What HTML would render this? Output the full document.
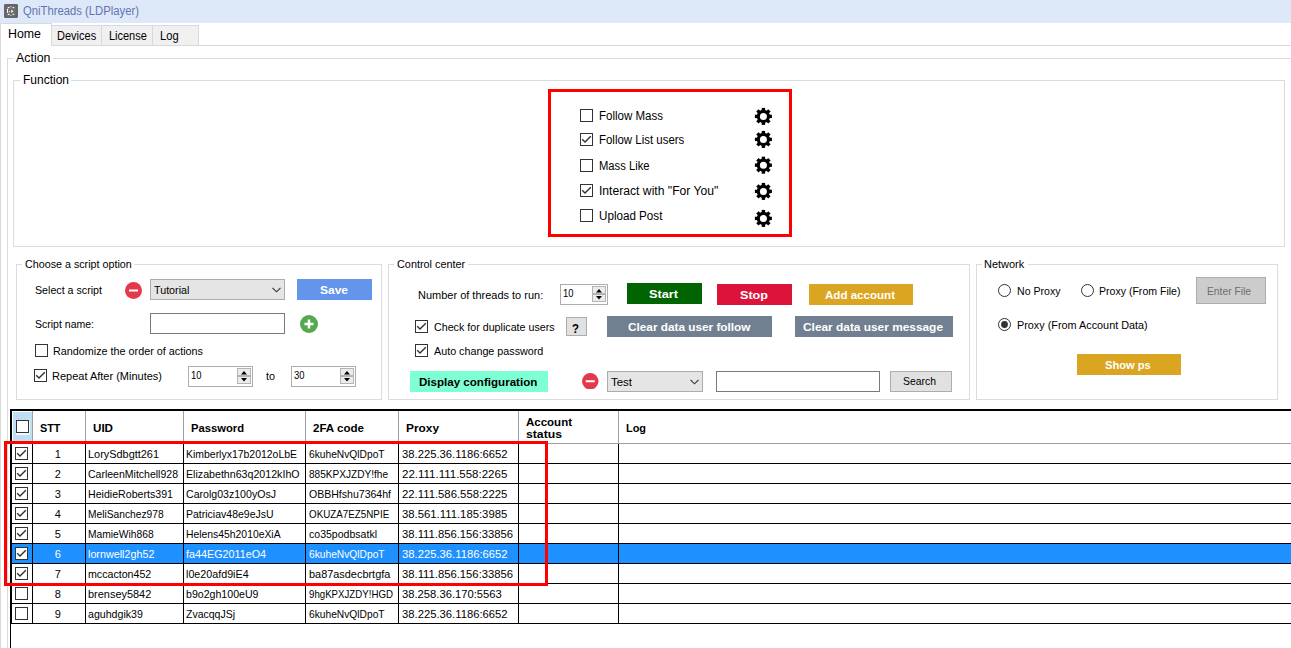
<!DOCTYPE html>
<html><head><meta charset="utf-8"><style>
html,body{margin:0;padding:0;background:#fff;}
#r{position:relative;width:1291px;height:648px;overflow:hidden;background:#fff;font-family:"Liberation Sans",sans-serif;}
.a{position:absolute;}
.t{white-space:pre;transform-origin:0 0;}
.cb{width:13px;height:13px;border:1px solid #333;box-sizing:border-box;}
</style></head><body><div id="r">
<div class="a" style="left:0px;top:0px;width:1291px;height:23px;background:#dde9f8;"></div>
<svg class="a" style="left:4px;top:4px" width="14" height="14"><path d="M1 0 H13 L14 1 V13 L13 14 H1 L0 13 V1Z" fill="#6c6c6c"/><rect x="1" y="1" width="12" height="12" fill="none" stroke="#5e5e5e" stroke-width="0.8"/><rect x="3.8" y="3" width="1.8" height="1.2" fill="#fff"/><rect x="8.6" y="3" width="1.6" height="1.2" fill="#f4f4f4"/><rect x="6" y="2.3" width="2" height="0.8" fill="#bbb"/><rect x="3" y="4.8" width="1.1" height="4" fill="#fff"/><path d="M7.2 5.5 L9.6 7.3 L7.2 9.1Z" fill="#f0f0f0"/><rect x="5" y="7" width="1.2" height="1.2" fill="#ddd"/><rect x="3.8" y="9.8" width="1.8" height="1.2" fill="#fff"/><rect x="8.6" y="9.8" width="1.6" height="1.2" fill="#f4f4f4"/><rect x="6" y="11.3" width="2" height="0.8" fill="#bbb"/></svg>
<div class="a" style="left:51px;top:25px;width:51px;height:21px;background:#f0f0f0;border:1px solid #d9d9d9;box-sizing:border-box;"></div>
<div class="a" style="left:101px;top:25px;width:52px;height:21px;background:#f0f0f0;border:1px solid #d9d9d9;box-sizing:border-box;"></div>
<div class="a" style="left:152px;top:25px;width:47px;height:21px;background:#f0f0f0;border:1px solid #d9d9d9;box-sizing:border-box;"></div>
<div class="a" style="left:51px;top:45px;width:1240px;height:1px;background:#d9d9d9;"></div>
<div class="a" style="left:0px;top:23px;width:52px;height:23px;background:#fff;border:1px solid #d9d9d9;border-bottom:none;box-sizing:border-box;"></div>
<div class="a" style="left:0px;top:45px;width:1px;height:603px;background:#d9d9d9;"></div>
<div class="a" style="left:7px;top:58px;width:7px;height:1px;background:#dcdcdc;"></div>
<div class="a" style="left:53px;top:58px;width:1238px;height:1px;background:#dcdcdc;"></div>
<div class="a" style="left:7px;top:58px;width:1px;height:590px;background:#dcdcdc;"></div>
<div class="a" style="left:13px;top:80px;width:7px;height:1px;background:#dcdcdc;"></div>
<div class="a" style="left:71px;top:80px;width:1214px;height:1px;background:#dcdcdc;"></div>
<div class="a" style="left:13px;top:80px;width:1px;height:167px;background:#dcdcdc;"></div>
<div class="a" style="left:1284px;top:80px;width:1px;height:167px;background:#dcdcdc;"></div>
<div class="a" style="left:13px;top:246px;width:1272px;height:1px;background:#dcdcdc;"></div>
<div class="a" style="left:548px;top:89px;width:244px;height:148px;border:3px solid #ff0000;box-sizing:border-box;"></div>
<div class="a cb" style="left:580px;top:109px;background:#fff"></div>
<div class="a cb" style="left:580px;top:133px;background:#fff"><svg width="13" height="13" style="position:absolute;left:-1px;top:-1px"><path d="M2.2 6.3 L5 9.1 L10.8 3.3" fill="none" stroke="#333" stroke-width="1.4"/></svg></div>
<div class="a cb" style="left:580px;top:159px;background:#fff"></div>
<div class="a cb" style="left:580px;top:184px;background:#fff"><svg width="13" height="13" style="position:absolute;left:-1px;top:-1px"><path d="M2.2 6.3 L5 9.1 L10.8 3.3" fill="none" stroke="#333" stroke-width="1.4"/></svg></div>
<div class="a cb" style="left:580px;top:209px;background:#fff"></div>
<svg class="a" style="left:754px;top:107px" width="20" height="20"><circle cx="9.40" cy="9.40" r="6.6" fill="#000"/><rect x="7.70" y="0.90" width="3.4" height="4" fill="#000" transform="rotate(0 9.40 9.40)"/><rect x="7.70" y="0.90" width="3.4" height="4" fill="#000" transform="rotate(45 9.40 9.40)"/><rect x="7.70" y="0.90" width="3.4" height="4" fill="#000" transform="rotate(90 9.40 9.40)"/><rect x="7.70" y="0.90" width="3.4" height="4" fill="#000" transform="rotate(135 9.40 9.40)"/><rect x="7.70" y="0.90" width="3.4" height="4" fill="#000" transform="rotate(180 9.40 9.40)"/><rect x="7.70" y="0.90" width="3.4" height="4" fill="#000" transform="rotate(225 9.40 9.40)"/><rect x="7.70" y="0.90" width="3.4" height="4" fill="#000" transform="rotate(270 9.40 9.40)"/><rect x="7.70" y="0.90" width="3.4" height="4" fill="#000" transform="rotate(315 9.40 9.40)"/><circle cx="9.40" cy="9.40" r="3.5" fill="#fff"/></svg>
<svg class="a" style="left:754px;top:130px" width="20" height="20"><circle cx="9.40" cy="9.40" r="6.6" fill="#000"/><rect x="7.70" y="0.90" width="3.4" height="4" fill="#000" transform="rotate(0 9.40 9.40)"/><rect x="7.70" y="0.90" width="3.4" height="4" fill="#000" transform="rotate(45 9.40 9.40)"/><rect x="7.70" y="0.90" width="3.4" height="4" fill="#000" transform="rotate(90 9.40 9.40)"/><rect x="7.70" y="0.90" width="3.4" height="4" fill="#000" transform="rotate(135 9.40 9.40)"/><rect x="7.70" y="0.90" width="3.4" height="4" fill="#000" transform="rotate(180 9.40 9.40)"/><rect x="7.70" y="0.90" width="3.4" height="4" fill="#000" transform="rotate(225 9.40 9.40)"/><rect x="7.70" y="0.90" width="3.4" height="4" fill="#000" transform="rotate(270 9.40 9.40)"/><rect x="7.70" y="0.90" width="3.4" height="4" fill="#000" transform="rotate(315 9.40 9.40)"/><circle cx="9.40" cy="9.40" r="3.5" fill="#fff"/></svg>
<svg class="a" style="left:754px;top:156px" width="20" height="20"><circle cx="9.40" cy="9.20" r="6.6" fill="#000"/><rect x="7.70" y="0.70" width="3.4" height="4" fill="#000" transform="rotate(0 9.40 9.20)"/><rect x="7.70" y="0.70" width="3.4" height="4" fill="#000" transform="rotate(45 9.40 9.20)"/><rect x="7.70" y="0.70" width="3.4" height="4" fill="#000" transform="rotate(90 9.40 9.20)"/><rect x="7.70" y="0.70" width="3.4" height="4" fill="#000" transform="rotate(135 9.40 9.20)"/><rect x="7.70" y="0.70" width="3.4" height="4" fill="#000" transform="rotate(180 9.40 9.20)"/><rect x="7.70" y="0.70" width="3.4" height="4" fill="#000" transform="rotate(225 9.40 9.20)"/><rect x="7.70" y="0.70" width="3.4" height="4" fill="#000" transform="rotate(270 9.40 9.20)"/><rect x="7.70" y="0.70" width="3.4" height="4" fill="#000" transform="rotate(315 9.40 9.20)"/><circle cx="9.40" cy="9.20" r="3.5" fill="#fff"/></svg>
<svg class="a" style="left:754px;top:182px" width="20" height="20"><circle cx="9.40" cy="9.40" r="6.6" fill="#000"/><rect x="7.70" y="0.90" width="3.4" height="4" fill="#000" transform="rotate(0 9.40 9.40)"/><rect x="7.70" y="0.90" width="3.4" height="4" fill="#000" transform="rotate(45 9.40 9.40)"/><rect x="7.70" y="0.90" width="3.4" height="4" fill="#000" transform="rotate(90 9.40 9.40)"/><rect x="7.70" y="0.90" width="3.4" height="4" fill="#000" transform="rotate(135 9.40 9.40)"/><rect x="7.70" y="0.90" width="3.4" height="4" fill="#000" transform="rotate(180 9.40 9.40)"/><rect x="7.70" y="0.90" width="3.4" height="4" fill="#000" transform="rotate(225 9.40 9.40)"/><rect x="7.70" y="0.90" width="3.4" height="4" fill="#000" transform="rotate(270 9.40 9.40)"/><rect x="7.70" y="0.90" width="3.4" height="4" fill="#000" transform="rotate(315 9.40 9.40)"/><circle cx="9.40" cy="9.40" r="3.5" fill="#fff"/></svg>
<svg class="a" style="left:754px;top:209px" width="20" height="20"><circle cx="9.40" cy="9.40" r="6.6" fill="#000"/><rect x="7.70" y="0.90" width="3.4" height="4" fill="#000" transform="rotate(0 9.40 9.40)"/><rect x="7.70" y="0.90" width="3.4" height="4" fill="#000" transform="rotate(45 9.40 9.40)"/><rect x="7.70" y="0.90" width="3.4" height="4" fill="#000" transform="rotate(90 9.40 9.40)"/><rect x="7.70" y="0.90" width="3.4" height="4" fill="#000" transform="rotate(135 9.40 9.40)"/><rect x="7.70" y="0.90" width="3.4" height="4" fill="#000" transform="rotate(180 9.40 9.40)"/><rect x="7.70" y="0.90" width="3.4" height="4" fill="#000" transform="rotate(225 9.40 9.40)"/><rect x="7.70" y="0.90" width="3.4" height="4" fill="#000" transform="rotate(270 9.40 9.40)"/><rect x="7.70" y="0.90" width="3.4" height="4" fill="#000" transform="rotate(315 9.40 9.40)"/><circle cx="9.40" cy="9.40" r="3.5" fill="#fff"/></svg>
<div class="a" style="left:16px;top:264px;width:6px;height:1px;background:#dcdcdc;"></div>
<div class="a" style="left:134px;top:264px;width:248px;height:1px;background:#dcdcdc;"></div>
<div class="a" style="left:16px;top:264px;width:1px;height:136px;background:#dcdcdc;"></div>
<div class="a" style="left:381px;top:264px;width:1px;height:136px;background:#dcdcdc;"></div>
<div class="a" style="left:16px;top:399px;width:366px;height:1px;background:#dcdcdc;"></div>
<svg class="a" style="left:125.0px;top:282.0px" width="17" height="17"><circle cx="8.5" cy="8.5" r="8.5" fill="#e5394b"/><rect x="4.0" y="7.5" width="9" height="2" fill="#fff"/></svg>
<div class="a" style="left:150px;top:279px;width:135px;height:21px;background:#e5e5e5;border:1px solid #acacac;box-sizing:border-box;"></div>
<svg class="a" style="left:271.5px;top:287.0px" width="9" height="6"><path d="M0.5 0.8 L4.5 4.8 L8.5 0.8" fill="none" stroke="#333" stroke-width="1.1"/></svg>
<div class="a" style="left:297px;top:279px;width:75px;height:21px;background:#6495ed;"></div>
<div class="a" style="left:150px;top:313px;width:135px;height:21px;background:#fff;border:1px solid #7a7a7a;box-sizing:border-box;"></div>
<svg class="a" style="left:300.0px;top:315.0px" width="18" height="18"><circle cx="9.0" cy="9.0" r="9.0" fill="#55a84c"/><rect x="4.5" y="7.75" width="9" height="2.5" fill="#fff"/><rect x="7.75" y="4.5" width="2.5" height="9" fill="#fff"/></svg>
<div class="a cb" style="left:35px;top:344px;background:#fff"></div>
<div class="a cb" style="left:34px;top:369px;background:#fff"><svg width="13" height="13" style="position:absolute;left:-1px;top:-1px"><path d="M2.2 6.3 L5 9.1 L10.8 3.3" fill="none" stroke="#333" stroke-width="1.4"/></svg></div>
<div class="a" style="left:188px;top:366px;width:65px;height:21px;background:#fff;border:1px solid #adadad;box-sizing:border-box;"></div>
<div class="a" style="left:237px;top:368px;width:14px;height:16px;background:#ececec;border:1px solid #b4b4b4;box-sizing:border-box;"></div>
<div class="a" style="left:237px;top:375px;width:14px;height:2px;background:#b4b4b4;"></div>
<svg class="a" style="left:241px;top:371px" width="6" height="4"><path d="M0 3.5 L3 0 L6 3.5Z" fill="#000"/></svg>
<svg class="a" style="left:241px;top:378px" width="6" height="4"><path d="M0 0 L3 3.5 L6 0Z" fill="#000"/></svg>
<div class="a" style="left:291px;top:366px;width:65px;height:21px;background:#fff;border:1px solid #adadad;box-sizing:border-box;"></div>
<div class="a" style="left:340px;top:368px;width:14px;height:16px;background:#ececec;border:1px solid #b4b4b4;box-sizing:border-box;"></div>
<div class="a" style="left:340px;top:375px;width:14px;height:2px;background:#b4b4b4;"></div>
<svg class="a" style="left:344px;top:371px" width="6" height="4"><path d="M0 3.5 L3 0 L6 3.5Z" fill="#000"/></svg>
<svg class="a" style="left:344px;top:378px" width="6" height="4"><path d="M0 0 L3 3.5 L6 0Z" fill="#000"/></svg>
<div class="a" style="left:388px;top:264px;width:6px;height:1px;background:#dcdcdc;"></div>
<div class="a" style="left:468px;top:264px;width:502px;height:1px;background:#dcdcdc;"></div>
<div class="a" style="left:388px;top:264px;width:1px;height:136px;background:#dcdcdc;"></div>
<div class="a" style="left:969px;top:264px;width:1px;height:136px;background:#dcdcdc;"></div>
<div class="a" style="left:388px;top:399px;width:582px;height:1px;background:#dcdcdc;"></div>
<div class="a" style="left:560px;top:284px;width:48px;height:21px;background:#fff;border:1px solid #adadad;box-sizing:border-box;"></div>
<div class="a" style="left:592px;top:286px;width:14px;height:16px;background:#ececec;border:1px solid #b4b4b4;box-sizing:border-box;"></div>
<div class="a" style="left:592px;top:293px;width:14px;height:2px;background:#b4b4b4;"></div>
<svg class="a" style="left:596px;top:289px" width="6" height="4"><path d="M0 3.5 L3 0 L6 3.5Z" fill="#000"/></svg>
<svg class="a" style="left:596px;top:296px" width="6" height="4"><path d="M0 0 L3 3.5 L6 0Z" fill="#000"/></svg>
<div class="a" style="left:627px;top:283px;width:75px;height:21px;background:#006400;"></div>
<div class="a" style="left:717px;top:284px;width:75px;height:21px;background:#dc143c;"></div>
<div class="a" style="left:809px;top:284px;width:104px;height:21px;background:#daa520;"></div>
<div class="a cb" style="left:415px;top:320px;background:#fff"><svg width="13" height="13" style="position:absolute;left:-1px;top:-1px"><path d="M2.2 6.3 L5 9.1 L10.8 3.3" fill="none" stroke="#333" stroke-width="1.4"/></svg></div>
<div class="a" style="left:566px;top:317px;width:21px;height:19px;background:#e1e1e1;border:1px solid #adadad;box-sizing:border-box;"></div>
<div class="a" style="left:607px;top:316px;width:165px;height:21px;background:#708090;"></div>
<div class="a" style="left:795px;top:316px;width:158px;height:21px;background:#708090;"></div>
<div class="a cb" style="left:415px;top:344px;background:#fff"><svg width="13" height="13" style="position:absolute;left:-1px;top:-1px"><path d="M2.2 6.3 L5 9.1 L10.8 3.3" fill="none" stroke="#333" stroke-width="1.4"/></svg></div>
<div class="a" style="left:410px;top:371px;width:138px;height:21px;background:#7fffd4;"></div>
<svg class="a" style="left:582.25px;top:372.75px" width="16.5" height="16.5"><circle cx="8.25" cy="8.25" r="8.25" fill="#e5394b"/><rect x="3.75" y="7.25" width="9" height="2" fill="#fff"/></svg>
<div class="a" style="left:607px;top:371px;width:96px;height:21px;background:#e5e5e5;border:1px solid #acacac;box-sizing:border-box;"></div>
<svg class="a" style="left:689.5px;top:379.0px" width="9" height="6"><path d="M0.5 0.8 L4.5 4.8 L8.5 0.8" fill="none" stroke="#333" stroke-width="1.1"/></svg>
<div class="a" style="left:716px;top:371px;width:164px;height:21px;background:#fff;border:1px solid #7a7a7a;box-sizing:border-box;"></div>
<div class="a" style="left:890px;top:371px;width:62px;height:21px;background:#e1e1e1;border:1px solid #adadad;box-sizing:border-box;"></div>
<div class="a" style="left:976px;top:264px;width:6px;height:1px;background:#dcdcdc;"></div>
<div class="a" style="left:1028px;top:264px;width:250px;height:1px;background:#dcdcdc;"></div>
<div class="a" style="left:976px;top:264px;width:1px;height:136px;background:#dcdcdc;"></div>
<div class="a" style="left:1277px;top:264px;width:1px;height:136px;background:#dcdcdc;"></div>
<div class="a" style="left:976px;top:399px;width:302px;height:1px;background:#dcdcdc;"></div>
<svg class="a" style="left:998px;top:284px" width="14" height="14"><circle cx="6.5" cy="6.5" r="6" fill="#fff" stroke="#333" stroke-width="1"/></svg>
<svg class="a" style="left:1081px;top:284px" width="14" height="14"><circle cx="6.5" cy="6.5" r="6" fill="#fff" stroke="#333" stroke-width="1"/></svg>
<div class="a" style="left:1196px;top:277px;width:70px;height:27px;background:#cccccc;border:1px solid #adadad;box-sizing:border-box;"></div>
<svg class="a" style="left:998px;top:318px" width="14" height="14"><circle cx="6.5" cy="6.5" r="6" fill="#fff" stroke="#333" stroke-width="1"/><circle cx="6.5" cy="6.5" r="3.4" fill="#333"/></svg>
<div class="a" style="left:1077px;top:354px;width:104px;height:21px;background:#daa520;"></div>
<div class="a" style="left:10px;top:409px;width:1281px;height:2px;background:#000;"></div>
<div class="a" style="left:10px;top:409px;width:1px;height:239px;background:#000;"></div>
<div class="a" style="left:11px;top:409px;width:1px;height:215px;background:#000;"></div>
<div class="a" style="left:13px;top:412px;width:19px;height:31px;background:#bde0f2;"></div>
<div class="a" style="left:16px;top:433px;width:14px;height:2px;background:#f4f8fa;"></div>
<div class="a" style="left:29px;top:421px;width:1px;height:13px;background:#f4f8fa;"></div>
<div class="a cb" style="left:16px;top:420px;background:#fff"></div>
<div class="a" style="left:16px;top:416px;width:1px;height:1px;background:#d8b8f0;"></div>
<div class="a" style="left:19px;top:415px;width:1px;height:1px;background:#d8b8f0;"></div>
<div class="a" style="left:22px;top:415px;width:1px;height:1px;background:#d8b8f0;"></div>
<div class="a" style="left:18px;top:418px;width:1px;height:1px;background:#d8b8f0;"></div>
<div class="a" style="left:21px;top:417px;width:1px;height:1px;background:#d8b8f0;"></div>
<div class="a" style="left:24px;top:418px;width:1px;height:1px;background:#d8b8f0;"></div>
<div class="a" style="left:17px;top:438px;width:1px;height:1px;background:#d8b8f0;"></div>
<div class="a" style="left:20px;top:438px;width:1px;height:1px;background:#d8b8f0;"></div>
<div class="a" style="left:23px;top:438px;width:1px;height:1px;background:#d8b8f0;"></div>
<div class="a" style="left:32px;top:411px;width:1px;height:32px;background:#a0a0a0;"></div>
<div class="a" style="left:85px;top:411px;width:1px;height:32px;background:#a0a0a0;"></div>
<div class="a" style="left:183px;top:411px;width:1px;height:32px;background:#a0a0a0;"></div>
<div class="a" style="left:305px;top:411px;width:1px;height:32px;background:#a0a0a0;"></div>
<div class="a" style="left:398px;top:411px;width:1px;height:32px;background:#a0a0a0;"></div>
<div class="a" style="left:518px;top:411px;width:1px;height:32px;background:#a0a0a0;"></div>
<div class="a" style="left:618px;top:411px;width:1px;height:32px;background:#a0a0a0;"></div>
<div class="a" style="left:12px;top:443px;width:1279px;height:1px;background:#a0a0a0;"></div>
<div class="a" style="left:12px;top:463px;width:1279px;height:1px;background:#000;"></div>
<div class="a" style="left:32px;top:444px;width:1px;height:20px;background:#000;"></div>
<div class="a" style="left:85px;top:444px;width:1px;height:20px;background:#000;"></div>
<div class="a" style="left:183px;top:444px;width:1px;height:20px;background:#000;"></div>
<div class="a" style="left:305px;top:444px;width:1px;height:20px;background:#000;"></div>
<div class="a" style="left:398px;top:444px;width:1px;height:20px;background:#000;"></div>
<div class="a" style="left:518px;top:444px;width:1px;height:20px;background:#000;"></div>
<div class="a" style="left:618px;top:444px;width:1px;height:20px;background:#000;"></div>
<div class="a cb" style="left:15px;top:447px;background:#fff"><svg width="13" height="13" style="position:absolute;left:-1px;top:-1px"><path d="M2.2 6.3 L5 9.1 L10.8 3.3" fill="none" stroke="#333" stroke-width="1.4"/></svg></div>
<div class="a" style="left:12px;top:483px;width:1279px;height:1px;background:#000;"></div>
<div class="a" style="left:32px;top:464px;width:1px;height:20px;background:#000;"></div>
<div class="a" style="left:85px;top:464px;width:1px;height:20px;background:#000;"></div>
<div class="a" style="left:183px;top:464px;width:1px;height:20px;background:#000;"></div>
<div class="a" style="left:305px;top:464px;width:1px;height:20px;background:#000;"></div>
<div class="a" style="left:398px;top:464px;width:1px;height:20px;background:#000;"></div>
<div class="a" style="left:518px;top:464px;width:1px;height:20px;background:#000;"></div>
<div class="a" style="left:618px;top:464px;width:1px;height:20px;background:#000;"></div>
<div class="a cb" style="left:15px;top:467px;background:#fff"><svg width="13" height="13" style="position:absolute;left:-1px;top:-1px"><path d="M2.2 6.3 L5 9.1 L10.8 3.3" fill="none" stroke="#333" stroke-width="1.4"/></svg></div>
<div class="a" style="left:12px;top:503px;width:1279px;height:1px;background:#000;"></div>
<div class="a" style="left:32px;top:484px;width:1px;height:20px;background:#000;"></div>
<div class="a" style="left:85px;top:484px;width:1px;height:20px;background:#000;"></div>
<div class="a" style="left:183px;top:484px;width:1px;height:20px;background:#000;"></div>
<div class="a" style="left:305px;top:484px;width:1px;height:20px;background:#000;"></div>
<div class="a" style="left:398px;top:484px;width:1px;height:20px;background:#000;"></div>
<div class="a" style="left:518px;top:484px;width:1px;height:20px;background:#000;"></div>
<div class="a" style="left:618px;top:484px;width:1px;height:20px;background:#000;"></div>
<div class="a cb" style="left:15px;top:487px;background:#fff"><svg width="13" height="13" style="position:absolute;left:-1px;top:-1px"><path d="M2.2 6.3 L5 9.1 L10.8 3.3" fill="none" stroke="#333" stroke-width="1.4"/></svg></div>
<div class="a" style="left:12px;top:523px;width:1279px;height:1px;background:#000;"></div>
<div class="a" style="left:32px;top:504px;width:1px;height:20px;background:#000;"></div>
<div class="a" style="left:85px;top:504px;width:1px;height:20px;background:#000;"></div>
<div class="a" style="left:183px;top:504px;width:1px;height:20px;background:#000;"></div>
<div class="a" style="left:305px;top:504px;width:1px;height:20px;background:#000;"></div>
<div class="a" style="left:398px;top:504px;width:1px;height:20px;background:#000;"></div>
<div class="a" style="left:518px;top:504px;width:1px;height:20px;background:#000;"></div>
<div class="a" style="left:618px;top:504px;width:1px;height:20px;background:#000;"></div>
<div class="a cb" style="left:15px;top:507px;background:#fff"><svg width="13" height="13" style="position:absolute;left:-1px;top:-1px"><path d="M2.2 6.3 L5 9.1 L10.8 3.3" fill="none" stroke="#333" stroke-width="1.4"/></svg></div>
<div class="a" style="left:12px;top:543px;width:1279px;height:1px;background:#000;"></div>
<div class="a" style="left:32px;top:524px;width:1px;height:20px;background:#000;"></div>
<div class="a" style="left:85px;top:524px;width:1px;height:20px;background:#000;"></div>
<div class="a" style="left:183px;top:524px;width:1px;height:20px;background:#000;"></div>
<div class="a" style="left:305px;top:524px;width:1px;height:20px;background:#000;"></div>
<div class="a" style="left:398px;top:524px;width:1px;height:20px;background:#000;"></div>
<div class="a" style="left:518px;top:524px;width:1px;height:20px;background:#000;"></div>
<div class="a" style="left:618px;top:524px;width:1px;height:20px;background:#000;"></div>
<div class="a cb" style="left:15px;top:527px;background:#fff"><svg width="13" height="13" style="position:absolute;left:-1px;top:-1px"><path d="M2.2 6.3 L5 9.1 L10.8 3.3" fill="none" stroke="#333" stroke-width="1.4"/></svg></div>
<div class="a" style="left:12px;top:544px;width:1279px;height:19px;background:#1e90ff;"></div>
<div class="a" style="left:12px;top:563px;width:1279px;height:1px;background:#000;"></div>
<div class="a" style="left:32px;top:544px;width:1px;height:20px;background:#000;"></div>
<div class="a" style="left:85px;top:544px;width:1px;height:20px;background:#000;"></div>
<div class="a" style="left:183px;top:544px;width:1px;height:20px;background:#000;"></div>
<div class="a" style="left:305px;top:544px;width:1px;height:20px;background:#000;"></div>
<div class="a" style="left:398px;top:544px;width:1px;height:20px;background:#000;"></div>
<div class="a" style="left:518px;top:544px;width:1px;height:20px;background:#000;"></div>
<div class="a" style="left:618px;top:544px;width:1px;height:20px;background:#000;"></div>
<div class="a cb" style="left:15px;top:547px;background:#fff"><svg width="13" height="13" style="position:absolute;left:-1px;top:-1px"><path d="M2.2 6.3 L5 9.1 L10.8 3.3" fill="none" stroke="#333" stroke-width="1.4"/></svg></div>
<div class="a" style="left:12px;top:583px;width:1279px;height:1px;background:#000;"></div>
<div class="a" style="left:32px;top:564px;width:1px;height:20px;background:#000;"></div>
<div class="a" style="left:85px;top:564px;width:1px;height:20px;background:#000;"></div>
<div class="a" style="left:183px;top:564px;width:1px;height:20px;background:#000;"></div>
<div class="a" style="left:305px;top:564px;width:1px;height:20px;background:#000;"></div>
<div class="a" style="left:398px;top:564px;width:1px;height:20px;background:#000;"></div>
<div class="a" style="left:518px;top:564px;width:1px;height:20px;background:#000;"></div>
<div class="a" style="left:618px;top:564px;width:1px;height:20px;background:#000;"></div>
<div class="a cb" style="left:15px;top:567px;background:#fff"><svg width="13" height="13" style="position:absolute;left:-1px;top:-1px"><path d="M2.2 6.3 L5 9.1 L10.8 3.3" fill="none" stroke="#333" stroke-width="1.4"/></svg></div>
<div class="a" style="left:12px;top:603px;width:1279px;height:1px;background:#000;"></div>
<div class="a" style="left:32px;top:584px;width:1px;height:20px;background:#000;"></div>
<div class="a" style="left:85px;top:584px;width:1px;height:20px;background:#000;"></div>
<div class="a" style="left:183px;top:584px;width:1px;height:20px;background:#000;"></div>
<div class="a" style="left:305px;top:584px;width:1px;height:20px;background:#000;"></div>
<div class="a" style="left:398px;top:584px;width:1px;height:20px;background:#000;"></div>
<div class="a" style="left:518px;top:584px;width:1px;height:20px;background:#000;"></div>
<div class="a" style="left:618px;top:584px;width:1px;height:20px;background:#000;"></div>
<div class="a cb" style="left:15px;top:587px;background:#fff"></div>
<div class="a" style="left:12px;top:623px;width:1279px;height:1px;background:#000;"></div>
<div class="a" style="left:32px;top:604px;width:1px;height:20px;background:#000;"></div>
<div class="a" style="left:85px;top:604px;width:1px;height:20px;background:#000;"></div>
<div class="a" style="left:183px;top:604px;width:1px;height:20px;background:#000;"></div>
<div class="a" style="left:305px;top:604px;width:1px;height:20px;background:#000;"></div>
<div class="a" style="left:398px;top:604px;width:1px;height:20px;background:#000;"></div>
<div class="a" style="left:518px;top:604px;width:1px;height:20px;background:#000;"></div>
<div class="a" style="left:618px;top:604px;width:1px;height:20px;background:#000;"></div>
<div class="a cb" style="left:15px;top:607px;background:#fff"></div>
<div class="a" style="left:4px;top:441px;width:544px;height:145px;border:3px solid #ff0000;box-sizing:border-box;"></div>
<div class="a t" style="top:5px;font-size:12px;line-height:12px;color:#6474b0;left:22.50px;transform:scaleX(0.9402);">QniThreads (LDPlayer)</div>
<div class="a t" style="top:28px;font-size:12px;line-height:12px;color:#000;left:8.10px;transform:scaleX(1.0307);">Home</div>
<div class="a t" style="top:30px;font-size:12px;line-height:12px;color:#000;left:56.70px;transform:scaleX(0.9183);">Devices</div>
<div class="a t" style="top:30px;font-size:12px;line-height:12px;color:#000;left:108.80px;transform:scaleX(0.9136);">License</div>
<div class="a t" style="top:30px;font-size:12px;line-height:12px;color:#000;left:159.60px;transform:scaleX(0.9285);">Log</div>
<div class="a t" style="top:52px;font-size:12px;line-height:12px;color:#000;left:16.30px;transform:scaleX(1.0312);">Action</div>
<div class="a t" style="top:74px;font-size:12px;line-height:12px;color:#000;left:22.50px;transform:scaleX(0.9993);">Function</div>
<div class="a t" style="top:110px;font-size:12px;line-height:12px;color:#000;left:598.60px;transform:scaleX(0.9597);">Follow Mass</div>
<div class="a t" style="top:134px;font-size:12px;line-height:12px;color:#000;left:598.60px;transform:scaleX(0.9544);">Follow List users</div>
<div class="a t" style="top:160px;font-size:12px;line-height:12px;color:#000;left:598.60px;transform:scaleX(0.9346);">Mass Like</div>
<div class="a t" style="top:185px;font-size:12px;line-height:12px;color:#000;left:598.60px;transform:scaleX(1.0117);">Interact with &quot;For You&quot;</div>
<div class="a t" style="top:210px;font-size:12px;line-height:12px;color:#000;left:598.60px;transform:scaleX(0.9698);">Upload Post</div>
<div class="a t" style="top:259px;font-size:11.5px;line-height:11.5px;color:#000;left:24.60px;transform:scaleX(0.9324);">Choose a script option</div>
<div class="a t" style="top:285px;font-size:11.5px;line-height:11.5px;color:#000;left:34.60px;transform:scaleX(0.9275);">Select a script</div>
<div class="a t" style="top:285px;font-size:11.5px;line-height:11.5px;color:#000;left:153.90px;transform:scaleX(0.9335);">Tutorial</div>
<div class="a t" style="top:285px;font-size:11px;line-height:11px;color:#fff;font-weight:bold;left:320.00px;transform:scaleX(1.0894);">Save</div>
<div class="a t" style="top:319px;font-size:11.5px;line-height:11.5px;color:#000;left:34.60px;transform:scaleX(0.9138);">Script name:</div>
<div class="a t" style="top:346px;font-size:11.5px;line-height:11.5px;color:#000;left:53.40px;transform:scaleX(0.9386);">Randomize the order of actions</div>
<div class="a t" style="top:371px;font-size:11.5px;line-height:11.5px;color:#000;left:52.20px;transform:scaleX(0.9560);">Repeat After (Minutes)</div>
<div class="a t" style="top:370px;font-size:11.5px;line-height:11.5px;color:#000;left:191.00px;transform:scaleX(0.8205);">10</div>
<div class="a t" style="top:371px;font-size:11.5px;line-height:11.5px;color:#000;left:266.00px;transform:scaleX(0.9381);">to</div>
<div class="a t" style="top:370px;font-size:11.5px;line-height:11.5px;color:#000;left:294.00px;transform:scaleX(0.8205);">30</div>
<div class="a t" style="top:259px;font-size:11.5px;line-height:11.5px;color:#000;left:396.60px;transform:scaleX(0.9441);">Control center</div>
<div class="a t" style="top:290px;font-size:11.5px;line-height:11.5px;color:#000;left:417.60px;transform:scaleX(0.9554);">Number of threads to run:</div>
<div class="a t" style="top:288px;font-size:11.5px;line-height:11.5px;color:#000;left:562.70px;transform:scaleX(0.8205);">10</div>
<div class="a t" style="top:289px;font-size:11px;line-height:11px;color:#fff;font-weight:bold;left:649.00px;transform:scaleX(1.1571);">Start</div>
<div class="a t" style="top:290px;font-size:11px;line-height:11px;color:#fff;font-weight:bold;left:740.00px;transform:scaleX(1.1450);">Stop</div>
<div class="a t" style="top:290px;font-size:11px;line-height:11px;color:#fff;font-weight:bold;left:825.00px;transform:scaleX(1.0507);">Add account</div>
<div class="a t" style="top:322px;font-size:11.5px;line-height:11.5px;color:#000;left:433.60px;transform:scaleX(0.9294);">Check for duplicate users</div>
<div class="a t" style="top:323px;font-size:12px;line-height:12px;color:#000;font-weight:bold;left:572.00px;transform:scaleX(0.9532);">?</div>
<div class="a t" style="top:322px;font-size:11px;line-height:11px;color:#fff;font-weight:bold;left:627.60px;transform:scaleX(1.0716);">Clear data user follow</div>
<div class="a t" style="top:322px;font-size:11px;line-height:11px;color:#fff;font-weight:bold;left:803.00px;transform:scaleX(1.0799);">Clear data user message</div>
<div class="a t" style="top:346px;font-size:11.5px;line-height:11.5px;color:#000;left:434.00px;transform:scaleX(0.9342);">Auto change password</div>
<div class="a t" style="top:377px;font-size:11px;line-height:11px;color:#000;font-weight:bold;left:419.30px;transform:scaleX(1.0518);">Display configuration</div>
<div class="a t" style="top:377px;font-size:11.5px;line-height:11.5px;color:#000;left:610.70px;transform:scaleX(0.9956);">Test</div>
<div class="a t" style="top:376px;font-size:11.5px;line-height:11.5px;color:#000;left:903.40px;transform:scaleX(0.9057);">Search</div>
<div class="a t" style="top:259px;font-size:11.5px;line-height:11.5px;color:#000;left:984.40px;transform:scaleX(0.9529);">Network</div>
<div class="a t" style="top:286px;font-size:11.5px;line-height:11.5px;color:#000;left:1016.50px;transform:scaleX(0.9197);">No Proxy</div>
<div class="a t" style="top:286px;font-size:11.5px;line-height:11.5px;color:#000;left:1099.40px;transform:scaleX(0.9177);">Proxy (From File)</div>
<div class="a t" style="top:286px;font-size:11.5px;line-height:11.5px;color:#6d6d6d;left:1207.40px;transform:scaleX(0.8940);">Enter File</div>
<div class="a t" style="top:320px;font-size:11.5px;line-height:11.5px;color:#000;left:1016.50px;transform:scaleX(0.9424);">Proxy (From Account Data)</div>
<div class="a t" style="top:360px;font-size:11px;line-height:11px;color:#fff;font-weight:bold;left:1105.00px;transform:scaleX(1.0125);">Show ps</div>
<div class="a t" style="top:423px;font-size:11px;line-height:11px;color:#000;font-weight:bold;left:40.00px;transform:scaleX(0.9865);">STT</div>
<div class="a t" style="top:423px;font-size:11px;line-height:11px;color:#000;font-weight:bold;left:93.00px;transform:scaleX(1.0552);">UID</div>
<div class="a t" style="top:423px;font-size:11px;line-height:11px;color:#000;font-weight:bold;left:191.00px;transform:scaleX(1.0198);">Password</div>
<div class="a t" style="top:423px;font-size:11px;line-height:11px;color:#000;font-weight:bold;left:313.00px;transform:scaleX(1.0515);">2FA code</div>
<div class="a t" style="top:423px;font-size:11px;line-height:11px;color:#000;font-weight:bold;left:406.00px;transform:scaleX(1.0792);">Proxy</div>
<div class="a t" style="top:417px;font-size:11px;line-height:11px;color:#000;font-weight:bold;left:526.30px;transform:scaleX(1.0455);">Account</div>
<div class="a t" style="top:429px;font-size:11px;line-height:11px;color:#000;font-weight:bold;left:526.30px;transform:scaleX(1.1109);">status</div>
<div class="a t" style="top:423px;font-size:11px;line-height:11px;color:#000;font-weight:bold;left:626.00px;transform:scaleX(0.9915);">Log</div>
<div class="a t" style="top:449px;font-size:11px;line-height:11px;color:#000;left:54.64px;">1</div>
<div class="a t" style="top:449px;font-size:11px;line-height:11px;color:#000;left:88.40px;transform:scaleX(0.9921);">LorySdbgtt261</div>
<div class="a t" style="top:449px;font-size:11px;line-height:11px;color:#000;left:186.40px;transform:scaleX(0.9502);">Kimberlyx17b2012oLbE</div>
<div class="a t" style="top:449px;font-size:11px;line-height:11px;color:#000;left:308.90px;transform:scaleX(0.9296);">6kuheNvQlDpoT</div>
<div class="a t" style="top:449px;font-size:11px;line-height:11px;color:#000;left:402.30px;transform:scaleX(1.0234);">38.225.36.1186:6652</div>
<div class="a t" style="top:469px;font-size:11px;line-height:11px;color:#000;left:54.64px;">2</div>
<div class="a t" style="top:469px;font-size:11px;line-height:11px;color:#000;left:88.40px;transform:scaleX(0.9557);">CarleenMitchell928</div>
<div class="a t" style="top:469px;font-size:11px;line-height:11px;color:#000;left:186.40px;transform:scaleX(0.9673);">Elizabethn63q2012kIhO</div>
<div class="a t" style="top:469px;font-size:11px;line-height:11px;color:#000;left:308.90px;transform:scaleX(0.9163);">885KPXJZDY!fhe</div>
<div class="a t" style="top:469px;font-size:11px;line-height:11px;color:#000;left:402.30px;transform:scaleX(1.0453);">22.111.111.558:2265</div>
<div class="a t" style="top:489px;font-size:11px;line-height:11px;color:#000;left:54.64px;">3</div>
<div class="a t" style="top:489px;font-size:11px;line-height:11px;color:#000;left:88.40px;transform:scaleX(0.9652);">HeidieRoberts391</div>
<div class="a t" style="top:489px;font-size:11px;line-height:11px;color:#000;left:186.40px;transform:scaleX(0.9619);">Carolg03z100yOsJ</div>
<div class="a t" style="top:489px;font-size:11px;line-height:11px;color:#000;left:308.90px;transform:scaleX(0.9577);">OBBHfshu7364hf</div>
<div class="a t" style="top:489px;font-size:11px;line-height:11px;color:#000;left:402.30px;transform:scaleX(1.0287);">22.111.586.558:2225</div>
<div class="a t" style="top:509px;font-size:11px;line-height:11px;color:#000;left:54.64px;">4</div>
<div class="a t" style="top:509px;font-size:11px;line-height:11px;color:#000;left:88.40px;transform:scaleX(0.9294);">MeliSanchez978</div>
<div class="a t" style="top:509px;font-size:11px;line-height:11px;color:#000;left:186.40px;transform:scaleX(0.9551);">Patriciav48e9eJsU</div>
<div class="a t" style="top:509px;font-size:11px;line-height:11px;color:#000;left:308.90px;transform:scaleX(0.8925);">OKUZA7EZ5NPIE</div>
<div class="a t" style="top:509px;font-size:11px;line-height:11px;color:#000;left:402.30px;transform:scaleX(1.0287);">38.561.111.185:3985</div>
<div class="a t" style="top:529px;font-size:11px;line-height:11px;color:#000;left:54.64px;">5</div>
<div class="a t" style="top:529px;font-size:11px;line-height:11px;color:#000;left:88.40px;transform:scaleX(0.9344);">MamieWih868</div>
<div class="a t" style="top:529px;font-size:11px;line-height:11px;color:#000;left:186.40px;transform:scaleX(0.9431);">Helens45h2010eXiA</div>
<div class="a t" style="top:529px;font-size:11px;line-height:11px;color:#000;left:308.90px;transform:scaleX(0.9584);">co35podbsatkl</div>
<div class="a t" style="top:529px;font-size:11px;line-height:11px;color:#000;left:402.30px;transform:scaleX(1.0241);">38.111.856.156:33856</div>
<div class="a t" style="top:549px;font-size:11px;line-height:11px;color:#fff;left:54.64px;">6</div>
<div class="a t" style="top:549px;font-size:11px;line-height:11px;color:#fff;left:88.40px;transform:scaleX(0.9780);">lornwell2gh52</div>
<div class="a t" style="top:549px;font-size:11px;line-height:11px;color:#fff;left:186.40px;transform:scaleX(0.9786);">fa44EG2011eO4</div>
<div class="a t" style="top:549px;font-size:11px;line-height:11px;color:#fff;left:308.90px;transform:scaleX(0.9296);">6kuheNvQlDpoT</div>
<div class="a t" style="top:549px;font-size:11px;line-height:11px;color:#fff;left:402.30px;transform:scaleX(1.0234);">38.225.36.1186:6652</div>
<div class="a t" style="top:569px;font-size:11px;line-height:11px;color:#000;left:54.64px;">7</div>
<div class="a t" style="top:569px;font-size:11px;line-height:11px;color:#000;left:88.40px;transform:scaleX(0.9673);">mccacton452</div>
<div class="a t" style="top:569px;font-size:11px;line-height:11px;color:#000;left:186.40px;transform:scaleX(0.9746);">l0e20afd9iE4</div>
<div class="a t" style="top:569px;font-size:11px;line-height:11px;color:#000;left:308.90px;transform:scaleX(0.9920);">ba87asdecbrtgfa</div>
<div class="a t" style="top:569px;font-size:11px;line-height:11px;color:#000;left:402.30px;transform:scaleX(1.0241);">38.111.856.156:33856</div>
<div class="a t" style="top:589px;font-size:11px;line-height:11px;color:#000;left:54.64px;">8</div>
<div class="a t" style="top:589px;font-size:11px;line-height:11px;color:#000;left:88.40px;transform:scaleX(0.9951);">brensey5842</div>
<div class="a t" style="top:589px;font-size:11px;line-height:11px;color:#000;left:186.40px;transform:scaleX(0.9635);">b9o2gh100eU9</div>
<div class="a t" style="top:589px;font-size:11px;line-height:11px;color:#000;left:308.90px;transform:scaleX(0.8797);">9hgKPXJZDY!HGD</div>
<div class="a t" style="top:589px;font-size:11px;line-height:11px;color:#000;left:402.30px;transform:scaleX(1.0197);">38.258.36.170:5563</div>
<div class="a t" style="top:609px;font-size:11px;line-height:11px;color:#000;left:54.64px;">9</div>
<div class="a t" style="top:609px;font-size:11px;line-height:11px;color:#000;left:88.40px;transform:scaleX(0.9650);">aguhdgik39</div>
<div class="a t" style="top:609px;font-size:11px;line-height:11px;color:#000;left:186.40px;transform:scaleX(0.9541);">ZvacqqJSj</div>
<div class="a t" style="top:609px;font-size:11px;line-height:11px;color:#000;left:308.90px;transform:scaleX(0.9296);">6kuheNvQlDpoT</div>
<div class="a t" style="top:609px;font-size:11px;line-height:11px;color:#000;left:402.30px;transform:scaleX(1.0234);">38.225.36.1186:6652</div>
</div></body></html>
